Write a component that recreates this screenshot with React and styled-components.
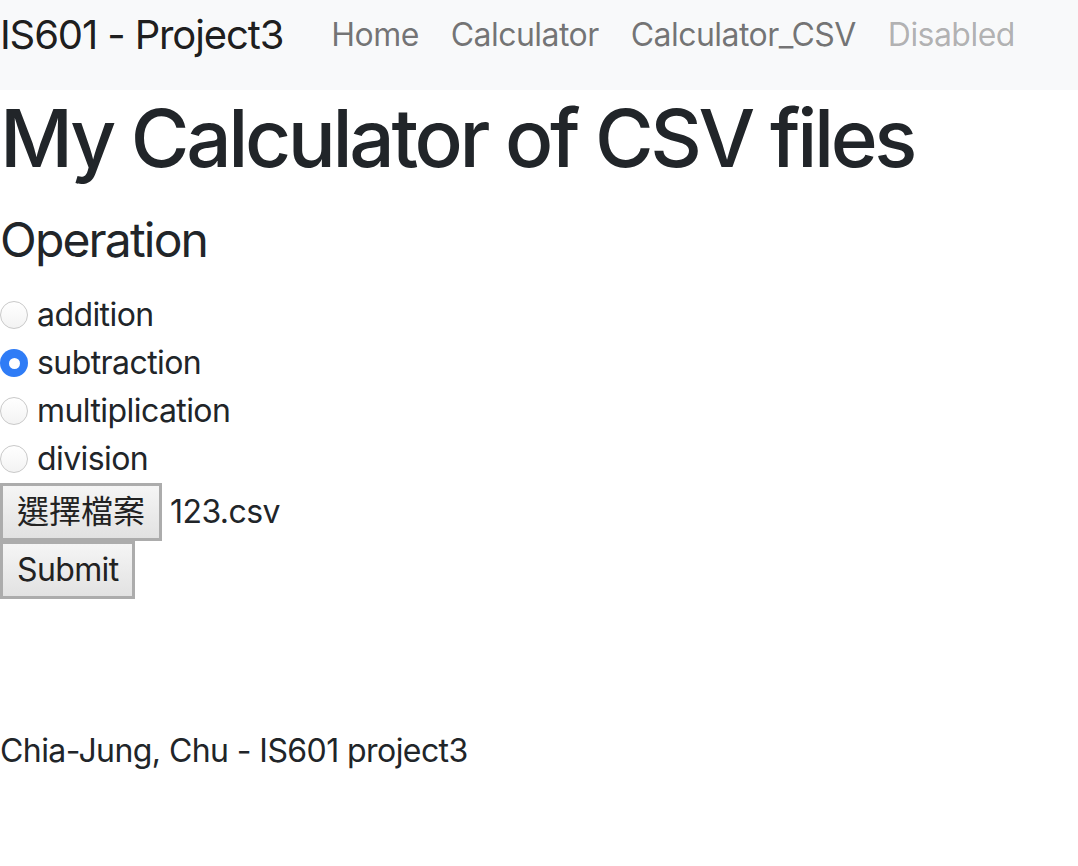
import React from "react";
import styled, { createGlobalStyle } from "styled-components";

const Global = createGlobalStyle`
  html, body { margin: 0; padding: 0; background: #fff; }
  body {
    font-family: Inter, "Noto Sans CJK TC", "Liberation Sans", sans-serif;
    font-size: 32px;
    line-height: 48px;
    letter-spacing: -0.018em;
    color: #212529;
  }
  * { box-sizing: border-box; }
`;

const Navbar = styled.nav`
  display: flex;
  align-items: center;
  height: 90px;
  padding-bottom: 20px;
  background: #f8f9fa;
`;

const Brand = styled.a`
  font-size: 40px;
  line-height: 60px;
  letter-spacing: -0.028em;
  color: rgba(0, 0, 0, 0.9);
  text-decoration: none;
  margin-right: 32px;
  white-space: nowrap;
`;

const NavList = styled.ul`
  display: flex;
  list-style: none;
  margin: 0;
  padding: 0;
`;

const NavLink = styled.a`
  display: block;
  padding: 0 16px;
  font-size: 32px;
  line-height: 48px;
  letter-spacing: -0.017em;
  text-decoration: none;
  white-space: nowrap;
  color: ${(p) => (p.$disabled ? "rgba(0,0,0,0.3)" : "rgba(0,0,0,0.55)")};
`;

const Main = styled.main`
  display: flex;
  flex-direction: column;
  align-items: flex-start;
`;

const Title = styled.h1`
  margin: 0 0 25px;
  font-size: 80px;
  line-height: 96px;
  font-weight: 500;
  letter-spacing: -0.042em;
  white-space: nowrap;
`;

const Subtitle = styled.h4`
  margin: 0 0 22px;
  font-size: 48px;
  line-height: 58px;
  font-weight: 400;
  letter-spacing: -0.038em;
`;

const Form = styled.form`
  display: flex;
  flex-direction: column;
  align-items: flex-start;
`;

const RadioRow = styled.label`
  display: flex;
  align-items: center;
  gap: 9px;
  height: 48px;
`;

const Radio = styled.input`
  appearance: none;
  margin: 0;
  width: 28px;
  height: 28px;
  border-radius: 50%;
  border: 1px solid #c9c9c9;
  background: linear-gradient(#ffffff, #f3f3f3);
  position: relative;
  &:checked {
    border: none;
    background: #2f7cf6;
  }
  &:checked::after {
    content: "";
    position: absolute;
    left: 50%;
    top: 50%;
    width: 11px;
    height: 11px;
    margin: -5.5px 0 0 -5.5px;
    border-radius: 50%;
    background: #fff;
  }
`;

const FileRow = styled.div`
  display: flex;
  align-items: center;
  gap: 8px;
`;

const Button = styled.button`
  font-family: inherit;
  font-size: 32px;
  line-height: 38px;
  letter-spacing: ${(p) => (p.$cjk ? "0" : "-0.02em")};
  color: #222;
  height: 58px;
  padding: 0 14px;
  margin: 0;
  border: 3px solid #acacac;
  border-radius: 0;
  background: linear-gradient(#f5f5f5, #e2e2e2);
  white-space: nowrap;
`;

const FileName = styled.span`
  font-size: 32px;
`;

const Footer = styled.footer`
  margin-top: 128px;
  font-size: 32px;
  line-height: 48px;
`;

const ops = ["addition", "subtraction", "multiplication", "division"];

export default function App() {
  return (
    <>
      <Global />
      <Navbar>
        <Brand href="#">IS601 - Project3</Brand>
        <NavList>
          <li><NavLink href="#">Home</NavLink></li>
          <li><NavLink href="#">Calculator</NavLink></li>
          <li><NavLink href="#">Calculator_CSV</NavLink></li>
          <li><NavLink $disabled>Disabled</NavLink></li>
        </NavList>
      </Navbar>
      <Main>
        <Title>My Calculator of CSV files</Title>
        <Subtitle>Operation</Subtitle>
        <Form onSubmit={(e) => e.preventDefault()}>
          {ops.map((op) => (
            <RadioRow key={op}>
              <Radio type="radio" name="op" value={op} defaultChecked={op === "subtraction"} />
              {op}
            </RadioRow>
          ))}
          <FileRow>
            <Button type="button" $cjk>選擇檔案</Button>
            <FileName>123.csv</FileName>
          </FileRow>
          <Button type="submit">Submit</Button>
        </Form>
        <Footer>Chia-Jung, Chu - IS601 project3</Footer>
      </Main>
    </>
  );
}
